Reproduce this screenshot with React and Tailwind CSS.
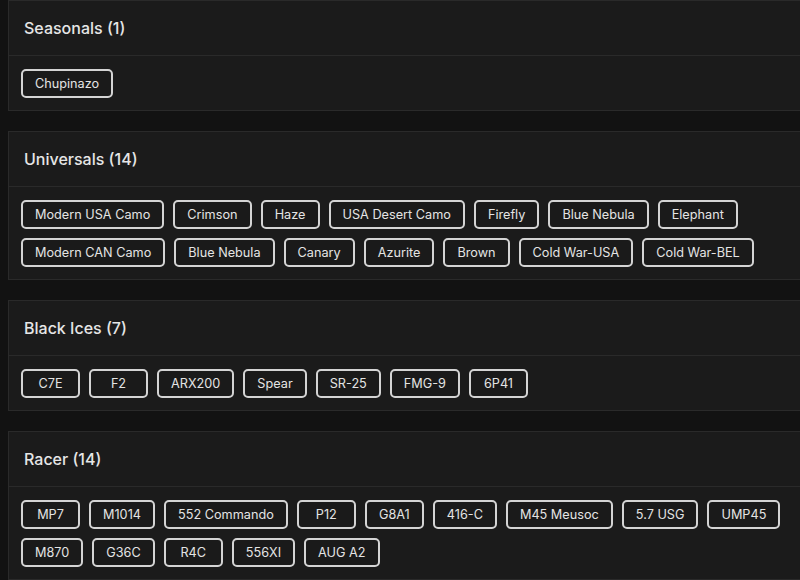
import React from "react";

const sections = [
  { title: "Seasonals (1)", items: ["Chupinazo"] },
  {
    title: "Universals (14)",
    items: [
      "Modern USA Camo", "Crimson", "Haze", "USA Desert Camo", "Firefly", "Blue Nebula", "Elephant",
      "Modern CAN Camo", "Blue Nebula", "Canary", "Azurite", "Brown", "Cold War-USA", "Cold War-BEL",
    ],
  },
  { title: "Black Ices (7)", items: ["C7E", "F2", "ARX200", "Spear", "SR-25", "FMG-9", "6P41"] },
  {
    title: "Racer (14)",
    items: [
      "MP7", "M1014", "552 Commando", "P12", "G8A1", "416-C", "M45 Meusoc", "5.7 USG", "UMP45",
      "M870", "G36C", "R4C", "556XI", "AUG A2",
    ],
  },
];

function Card({ title, items }) {
  return (
    <div className="w-[820px] bg-[#1b1b1b] border border-[#2a2a2a]">
      <div className="h-[55px] flex items-center pl-[15px] border-b border-[#2a2a2a]">
        <span className="text-[16px] font-medium text-[#e6e6e6]">{title}</span>
      </div>
      <div className="pt-[13px] pb-[12px] pl-3 flex flex-wrap gap-x-[9px] gap-y-[9px] w-[792px]">
        {items.map((it, i) => (
          <div
            key={i}
            className="h-[29px] min-w-[59px] px-3 flex items-center justify-center border-2 border-[#d4d4d4] rounded-[5px] bg-[#1a1a1a] text-[12.7px] text-[#e4e4e4]"
          >
            {it}
          </div>
        ))}
      </div>
    </div>
  );
}

export default function App() {
  return (
    <div
      className="w-[800px] h-[580px] overflow-hidden bg-[#121212] pl-2 flex flex-col gap-5"
      style={{ fontFamily: "Inter, 'Noto Sans', sans-serif" }}
    >
      {sections.map((s, i) => (
        <Card key={i} {...s} />
      ))}
    </div>
  );
}
